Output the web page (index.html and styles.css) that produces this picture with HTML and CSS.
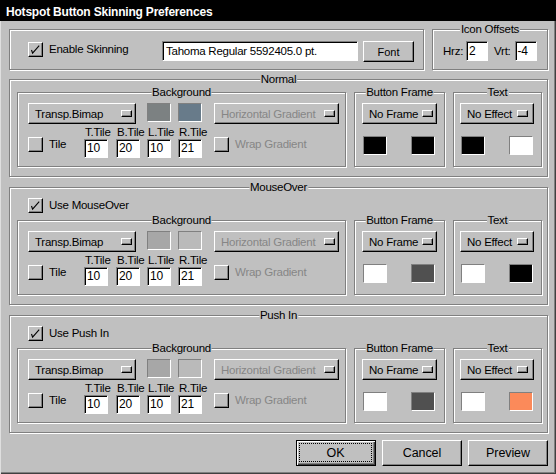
FILE: index.html
```html
<!DOCTYPE html>
<html>
<head>
<meta charset="utf-8">
<title>Hotspot Button Skinning Preferences</title>
<link rel="stylesheet" href="styles.css">
</head>
<body>
<div class="window">
  <div class="titlebar">Hotspot Button Skinning Preferences</div>
  <div class="content">
    <div class="toprow">
      <div class="grp grp-main">
        <div class="chkwrap">
          <span class="chk"><svg width="13" height="13" viewBox="0 0 13 13"><polyline points="2.5,7 3.6,10.2 10.2,2.6" fill="none" stroke="#000" stroke-width="1.1"/></svg></span>
          <span class="lbl">Enable Skinning</span>
        </div>
        <div class="field field-font">Tahoma Regular 5592405.0 pt.</div>
        <div class="btn btn-font">Font</div>
      </div>
      <div class="grp grp-icon">
        <span class="cap">Icon Offsets</span>
        <span class="lbl-io">Hrz:</span>
        <div class="field field-sm">2</div>
        <span class="lbl-io vrt">Vrt:</span>
        <div class="field field-sm field-vrt">-4</div>
      </div>
    </div>

    <div class="grp section section-normal">
      <span class="cap">Normal</span>
      <div class="boxes">
        <div class="grp bgbox">
          <span class="cap">Background</span>
          <div class="row1">
            <div class="pop pop-type"><span>Transp.Bimap</span><span class="ind"></span></div>
            <div class="sw sw1 c-n1"></div>
            <div class="sw sw2 c-n2"></div>
            <div class="pop pop-grad"><span>Horizontal Gradient</span><span class="ind"></span></div>
          </div>
          <div class="row2">
            <div class="tile"><span class="chk"></span><span>Tile</span></div>
            <div class="tiles">
              <div class="tcol"><span class="tlbl">T.Tile</span><div class="field fld">10</div></div>
              <div class="tcol"><span class="tlbl">B.Tile</span><div class="field fld">20</div></div>
              <div class="tcol"><span class="tlbl">L.Tile</span><div class="field fld">10</div></div>
              <div class="tcol"><span class="tlbl">R.Tile</span><div class="field fld">21</div></div>
            </div>
            <div class="wrap"><span class="chk"></span><span>Wrap Gradient</span></div>
          </div>
        </div>
        <div class="grp bfbox">
          <span class="cap">Button Frame</span>
          <div class="pop pop-frame"><span>No Frame</span><span class="ind"></span></div>
          <div class="swrow"><div class="sw c-black"></div><div class="sw c-black"></div></div>
        </div>
        <div class="grp txbox">
          <span class="cap">Text</span>
          <div class="pop pop-text"><span>No Effect</span><span class="ind"></span></div>
          <div class="swrow"><div class="sw c-black"></div><div class="sw c-white"></div></div>
        </div>
      </div>
    </div>

    <div class="grp section">
      <span class="cap">MouseOver</span>
      <div class="chkrow">
        <span class="chk"><svg width="13" height="13" viewBox="0 0 13 13"><polyline points="2.5,7 3.6,10.2 10.2,2.6" fill="none" stroke="#000" stroke-width="1.1"/></svg></span>
        <span class="lbl">Use MouseOver</span>
      </div>
      <div class="boxes">
        <div class="grp bgbox">
          <span class="cap">Background</span>
          <div class="row1">
            <div class="pop pop-type"><span>Transp.Bimap</span><span class="ind"></span></div>
            <div class="sw sw1 c-g1"></div>
            <div class="sw sw2 c-g2"></div>
            <div class="pop pop-grad"><span>Horizontal Gradient</span><span class="ind"></span></div>
          </div>
          <div class="row2">
            <div class="tile"><span class="chk"></span><span>Tile</span></div>
            <div class="tiles">
              <div class="tcol"><span class="tlbl">T.Tile</span><div class="field fld">10</div></div>
              <div class="tcol"><span class="tlbl">B.Tile</span><div class="field fld">20</div></div>
              <div class="tcol"><span class="tlbl">L.Tile</span><div class="field fld">10</div></div>
              <div class="tcol"><span class="tlbl">R.Tile</span><div class="field fld">21</div></div>
            </div>
            <div class="wrap"><span class="chk"></span><span>Wrap Gradient</span></div>
          </div>
        </div>
        <div class="grp bfbox">
          <span class="cap">Button Frame</span>
          <div class="pop pop-frame"><span>No Frame</span><span class="ind"></span></div>
          <div class="swrow"><div class="sw c-white"></div><div class="sw c-dark"></div></div>
        </div>
        <div class="grp txbox">
          <span class="cap">Text</span>
          <div class="pop pop-text"><span>No Effect</span><span class="ind"></span></div>
          <div class="swrow"><div class="sw c-white"></div><div class="sw c-black"></div></div>
        </div>
      </div>
    </div>

    <div class="grp section">
      <span class="cap">Push In</span>
      <div class="chkrow">
        <span class="chk"><svg width="13" height="13" viewBox="0 0 13 13"><polyline points="2.5,7 3.6,10.2 10.2,2.6" fill="none" stroke="#000" stroke-width="1.1"/></svg></span>
        <span class="lbl">Use Push In</span>
      </div>
      <div class="boxes">
        <div class="grp bgbox">
          <span class="cap">Background</span>
          <div class="row1">
            <div class="pop pop-type"><span>Transp.Bimap</span><span class="ind"></span></div>
            <div class="sw sw1 c-g1"></div>
            <div class="sw sw2 c-g2"></div>
            <div class="pop pop-grad"><span>Horizontal Gradient</span><span class="ind"></span></div>
          </div>
          <div class="row2">
            <div class="tile"><span class="chk"></span><span>Tile</span></div>
            <div class="tiles">
              <div class="tcol"><span class="tlbl">T.Tile</span><div class="field fld">10</div></div>
              <div class="tcol"><span class="tlbl">B.Tile</span><div class="field fld">20</div></div>
              <div class="tcol"><span class="tlbl">L.Tile</span><div class="field fld">10</div></div>
              <div class="tcol"><span class="tlbl">R.Tile</span><div class="field fld">21</div></div>
            </div>
            <div class="wrap"><span class="chk"></span><span>Wrap Gradient</span></div>
          </div>
        </div>
        <div class="grp bfbox">
          <span class="cap">Button Frame</span>
          <div class="pop pop-frame"><span>No Frame</span><span class="ind"></span></div>
          <div class="swrow"><div class="sw c-white"></div><div class="sw c-dark"></div></div>
        </div>
        <div class="grp txbox">
          <span class="cap">Text</span>
          <div class="pop pop-text"><span>No Effect</span><span class="ind"></span></div>
          <div class="swrow"><div class="sw c-white"></div><div class="sw c-orange"></div></div>
        </div>
      </div>
    </div>

    <div class="actions">
      <div class="btn abtn default"><span class="focus">OK</span></div>
      <div class="btn abtn">Cancel</div>
      <div class="btn abtn">Preview</div>
    </div>
  </div>
</div>
</body>
</html>
```
FILE: styles.css
```css
* { box-sizing: border-box; }
html, body { margin: 0; padding: 0; }
body {
  width: 556px;
  height: 474px;
  overflow: hidden;
  background: #c0c0c0;
  color: #000;
  font-family: "Liberation Sans", Arial, sans-serif;
  font-size: 11.5px;
  letter-spacing: -0.25px;
}
.window {
  width: 556px;
  height: 474px;
  background: #c0c0c0;
  box-shadow: inset 1px 0 #dfdfdf, inset -1px -1px #404040, inset -2px -2px #808080;
  display: flex;
  flex-direction: column;
}
.titlebar {
  height: 21px;
  flex: none;
  background: #000;
  color: #fff;
  font-weight: bold;
  font-size: 12px;
  letter-spacing: -0.2px;
  line-height: 20px;
  padding: 2px 0 0 6px;
  white-space: nowrap;
  overflow: hidden;
}
.content {
  padding: 8px 0 0 9px;
  display: flex;
  flex-direction: column;
}

/* etched group boxes */
.grp {
  position: relative;
  flex: none;
  border: 1px solid #808080;
  box-shadow: inset 1px 1px #fff, 1px 1px #fff;
}
.cap {
  position: absolute;
  top: -7px;
  left: 50%;
  transform: translateX(-50%);
  padding: 0 1px;
  line-height: 13px;
  background: #c0c0c0;
  white-space: nowrap;
}

/* controls */
.chk {
  flex: none;
  width: 15px;
  height: 15px;
  border: 1px solid;
  border-color: #fff #000 #000 #fff;
  box-shadow: inset -1px -1px #808080;
  background: #c0c0c0;
  display: block;
}
.chk svg { display: block; }
.lbl { line-height: 15px; white-space: nowrap; }

.field {
  flex: none;
  background: #fff;
  border: 1px solid;
  border-color: #808080 #fff #fff #808080;
  box-shadow: inset 1px 1px #000;
  white-space: nowrap;
  overflow: hidden;
}
.btn {
  flex: none;
  display: flex;
  align-items: center;
  justify-content: center;
  background: #c0c0c0;
  border: 1px solid;
  border-color: #fff #000 #000 #fff;
  box-shadow: inset -1px -1px #808080;
  white-space: nowrap;
}
.pop {
  flex: none;
  height: 21px;
  display: flex;
  align-items: center;
  justify-content: space-between;
  padding: 0 3px 0 6px;
  background: #c0c0c0;
  border: 1px solid;
  border-color: #fff #000 #000 #fff;
  box-shadow: inset -1px -1px #808080;
  white-space: nowrap;
}
.ind {
  flex: none;
  width: 11px;
  height: 7px;
  background: #c0c0c0;
  border: 1px solid;
  border-color: #fff #000 #000 #fff;
  box-shadow: inset -1px -1px #808080;
}
.sw {
  flex: none;
  width: 24px;
  height: 19px;
  border: 1px solid;
  border-color: #808080 #fff #fff #808080;
}

/* top row */
.toprow {
  display: flex;
  height: 41px;
  flex: none;
}
.grp-main {
  width: 415px;
  height: 41px;
  display: flex;
  align-items: flex-start;
  padding: 11px 0 0 18px;
}
.chkwrap {
  width: 134px;
  flex: none;
  display: flex;
  align-items: center;
  gap: 6px;
  margin-top: 1px;
}
.field-font {
  width: 196px;
  height: 20px;
  line-height: 18px;
  padding-left: 3px;
}
.btn-font {
  width: 51px;
  height: 21px;
  margin-left: 5px;
  font-size: 11px;
  letter-spacing: 0;
}
.grp-icon {
  width: 116px;
  height: 41px;
  margin-left: 8px;
  display: flex;
  align-items: flex-start;
  padding: 11px 0 0 10px;
}
.lbl-io { line-height: 20px; }
.lbl-io.vrt { margin-left: 6px; }
.field-sm {
  width: 22px;
  height: 20px;
  margin-left: 3px;
  padding-left: 2px;
  line-height: 18px;
  font-size: 12px;
}
.field-sm.field-vrt { margin-left: 4px; }

/* sections */
.section {
  width: 539px;
  margin-top: 10px;
  padding: 10px 0 9px 7px;
}
.section-normal {
  margin-top: 9px;
  padding-top: 12px;
}
.chkrow {
  display: flex;
  align-items: center;
  gap: 6px;
  height: 15px;
  margin: 0 0 7px 11px;
}
.boxes {
  display: flex;
  gap: 8px;
}
.bgbox {
  width: 329px;
  height: 75px;
  padding: 10px 0 0 10px;
}
.bfbox {
  width: 91px;
  height: 75px;
  padding: 10px 0 0 7px;
}
.txbox {
  width: 89px;
  height: 75px;
  padding: 10px 0 0 6px;
}
.row1 {
  display: flex;
  align-items: flex-start;
  height: 21px;
}
.pop-type { width: 108px; }
.sw1 { margin-left: 11px; }
.sw2 { margin-left: 7px; }
.pop-grad {
  width: 125px;
  margin-left: 12px;
  color: #868686;
}
.row2 {
  display: flex;
  align-items: flex-start;
  height: 34px;
}
.tile {
  width: 56px;
  flex: none;
  display: flex;
  align-items: center;
  gap: 6px;
  height: 15px;
  margin-top: 13px;
  line-height: 15px;
}
.tiles {
  display: grid;
  grid-template-columns: 32px 31px 31px 24px;
}
.tcol {
  display: flex;
  flex-direction: column;
}
.tlbl {
  height: 15px;
  padding: 2px 0 0 1px;
  line-height: 13px;
  white-space: nowrap;
}
.fld {
  width: 24px;
  height: 19px;
  padding-left: 2px;
  line-height: 17px;
  font-size: 12px;
}
.wrap {
  display: flex;
  align-items: center;
  gap: 6px;
  height: 15px;
  margin: 13px 0 0 12px;
  line-height: 15px;
  color: #868686;
  white-space: nowrap;
}
.pop-frame { width: 75px; }
.pop-text { width: 74px; padding-right: 5px; }
.swrow {
  display: flex;
  gap: 24px;
  margin-top: 12px;
  padding-left: 1px;
}

/* swatch colours */
.c-n1 { background: #7c8182; }
.c-n2 { background: #687b8a; }
.c-g1 { background: #a7a7a7; }
.c-g2 { background: #bababa; }
.c-black { background: #000; }
.c-white { background: #fff; }
.c-dark { background: #505050; }
.c-orange { background: #fb8a5a; }

/* bottom buttons */
.actions {
  display: flex;
  justify-content: flex-end;
  gap: 6px;
  width: 539px;
  margin-top: 7px;
}
.abtn {
  width: 80px;
  height: 26px;
  font-size: 12.5px;
  letter-spacing: -0.1px;
}
.default {
  border-color: #000;
  box-shadow: inset 1px 1px #fff, inset -1px -1px #404040, inset -2px -2px #808080;
  padding: 2px 3px 3px 2px;
  align-items: stretch;
}
.focus {
  flex: 1;
  display: flex;
  align-items: center;
  justify-content: center;
  border: 1px dotted #000;
}
```
